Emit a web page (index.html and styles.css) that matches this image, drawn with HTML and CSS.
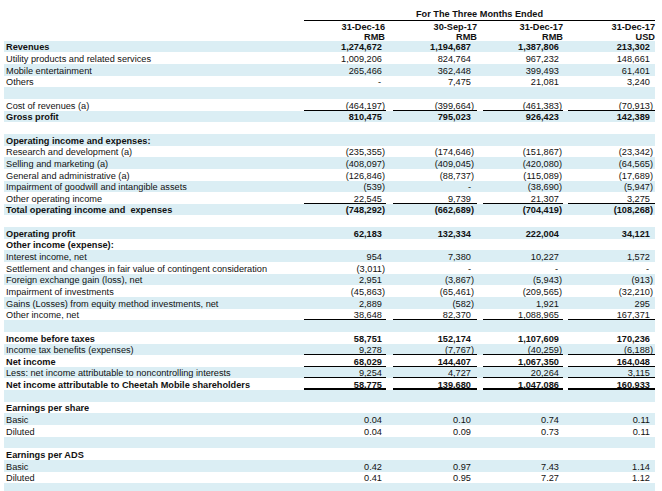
FILE: index.html
```html
<!DOCTYPE html>
<html>
<head>
<meta charset="utf-8">
<link rel="stylesheet" href="styles.css">
</head>
<body>
<div class="sheet">
  <div class="row head h1"><div class="span">For The Three Months Ended</div></div>
  <div class="row head h2"><div class="c c1">31-Dec-16</div><div class="c c2">30-Sep-17</div><div class="c c3">31-Dec-17</div><div class="c c4">31-Dec-17</div></div>
  <div class="row head h3"><div class="c c1">RMB</div><div class="c c2">RMB</div><div class="c c3">RMB</div><div class="c c4">USD</div></div>

  <div class="row alt b"><div class="lbl">Revenues</div><div class="c c1 p">1,274,672</div><div class="c c2 p">1,194,687</div><div class="c c3 p">1,387,806</div><div class="c c4 p">213,302</div></div>
  <div class="row"><div class="lbl">Utility products and related services</div><div class="c c1 p">1,009,206</div><div class="c c2 p">824,764</div><div class="c c3 p">967,232</div><div class="c c4 p">148,661</div></div>
  <div class="row alt"><div class="lbl">Mobile entertainment</div><div class="c c1 p">265,466</div><div class="c c2 p">362,448</div><div class="c c3 p">399,493</div><div class="c c4 p">61,401</div></div>
  <div class="row"><div class="lbl">Others</div><div class="c c1 d">-</div><div class="c c2 p">7,475</div><div class="c c3 p">21,081</div><div class="c c4 p">3,240</div></div>
  <div class="row alt"></div>
  <div class="row u"><div class="lbl">Cost of revenues (a)</div><div class="c c1">(464,197)</div><div class="c c2">(399,664)</div><div class="c c3">(461,383)</div><div class="c c4">(70,913)</div></div>
  <div class="row alt b"><div class="lbl">Gross profit</div><div class="c c1 p">810,475</div><div class="c c2 p">795,023</div><div class="c c3 p">926,423</div><div class="c c4 p">142,389</div></div>
  <div class="row"></div>
  <div class="row alt b"><div class="lbl">Operating income and expenses:</div></div>
  <div class="row"><div class="lbl">Research and development (a)</div><div class="c c1">(235,355)</div><div class="c c2">(174,646)</div><div class="c c3">(151,867)</div><div class="c c4">(23,342)</div></div>
  <div class="row alt"><div class="lbl">Selling and marketing (a)</div><div class="c c1">(408,097)</div><div class="c c2">(409,045)</div><div class="c c3">(420,080)</div><div class="c c4">(64,565)</div></div>
  <div class="row"><div class="lbl">General and administrative (a)</div><div class="c c1">(126,846)</div><div class="c c2">(88,737)</div><div class="c c3">(115,089)</div><div class="c c4">(17,689)</div></div>
  <div class="row alt"><div class="lbl">Impairment of goodwill and intangible assets</div><div class="c c1">(539)</div><div class="c c2 d">-</div><div class="c c3">(38,690)</div><div class="c c4">(5,947)</div></div>
  <div class="row u"><div class="lbl">Other operating income</div><div class="c c1 p">22,545</div><div class="c c2 p">9,739</div><div class="c c3 p">21,307</div><div class="c c4 p">3,275</div></div>
  <div class="row alt b"><div class="lbl">Total operating income and&nbsp; expenses</div><div class="c c1">(748,292)</div><div class="c c2">(662,689)</div><div class="c c3">(704,419)</div><div class="c c4">(108,268)</div></div>
  <div class="row"></div>
  <div class="row alt b"><div class="lbl">Operating profit</div><div class="c c1 p">62,183</div><div class="c c2 p">132,334</div><div class="c c3 p">222,004</div><div class="c c4 p">34,121</div></div>
  <div class="row b"><div class="lbl">Other income (expense):</div></div>
  <div class="row alt"><div class="lbl">Interest income, net</div><div class="c c1 p">954</div><div class="c c2 p">7,380</div><div class="c c3 p">10,227</div><div class="c c4 p">1,572</div></div>
  <div class="row"><div class="lbl">Settlement and changes in fair value of contingent consideration</div><div class="c c1">(3,011)</div><div class="c c2 d">-</div><div class="c c3 d">-</div><div class="c c4 d">-</div></div>
  <div class="row alt"><div class="lbl">Foreign exchange gain (loss), net</div><div class="c c1 p">2,951</div><div class="c c2">(3,867)</div><div class="c c3">(5,943)</div><div class="c c4">(913)</div></div>
  <div class="row"><div class="lbl">Impairment of investments</div><div class="c c1">(45,863)</div><div class="c c2">(65,461)</div><div class="c c3">(209,565)</div><div class="c c4">(32,210)</div></div>
  <div class="row alt"><div class="lbl">Gains (Losses) from equity method investments, net</div><div class="c c1 p">2,889</div><div class="c c2">(582)</div><div class="c c3 p">1,921</div><div class="c c4 p">295</div></div>
  <div class="row u"><div class="lbl">Other income, net</div><div class="c c1 p">38,648</div><div class="c c2 p">82,370</div><div class="c c3 p">1,088,965</div><div class="c c4 p">167,371</div></div>
  <div class="row alt"></div>
  <div class="row b"><div class="lbl">Income before taxes</div><div class="c c1 p">58,751</div><div class="c c2 p">152,174</div><div class="c c3 p">1,107,609</div><div class="c c4 p">170,236</div></div>
  <div class="row alt u"><div class="lbl">Income tax benefits (expenses)</div><div class="c c1 p">9,278</div><div class="c c2">(7,767)</div><div class="c c3">(40,259)</div><div class="c c4">(6,188)</div></div>
  <div class="row b u"><div class="lbl">Net income</div><div class="c c1 p">68,029</div><div class="c c2 p">144,407</div><div class="c c3 p">1,067,350</div><div class="c c4 p">164,048</div></div>
  <div class="row alt u"><div class="lbl">Less: net income attributable to noncontrolling interests</div><div class="c c1 p">9,254</div><div class="c c2 p">4,727</div><div class="c c3 p">20,264</div><div class="c c4 p">3,115</div></div>
  <div class="row b uu"><div class="lbl">Net income attributable to Cheetah Mobile shareholders</div><div class="c c1 p"><span class="ul">58,775</span></div><div class="c c2 p"><span class="ul">139,680</span></div><div class="c c3 p"><span class="ul">1,047,086</span></div><div class="c c4 p"><span class="ul">160,933</span></div></div>
  <div class="row alt"></div>
  <div class="row b"><div class="lbl">Earnings per share</div></div>
  <div class="row alt"><div class="lbl">Basic</div><div class="c c1 p">0.04</div><div class="c c2 p">0.10</div><div class="c c3 p">0.74</div><div class="c c4 p">0.11</div></div>
  <div class="row"><div class="lbl">Diluted</div><div class="c c1 p">0.04</div><div class="c c2 p">0.09</div><div class="c c3 p">0.73</div><div class="c c4 p">0.11</div></div>
  <div class="row alt"></div>
  <div class="row b"><div class="lbl">Earnings per ADS</div></div>
  <div class="row alt"><div class="lbl">Basic</div><div class="c c1 p">0.42</div><div class="c c2 p">0.97</div><div class="c c3 p">7.43</div><div class="c c4 p">1.14</div></div>
  <div class="row"><div class="lbl">Diluted</div><div class="c c1 p">0.41</div><div class="c c2 p">0.95</div><div class="c c3 p">7.27</div><div class="c c4 p">1.12</div></div>
  <div class="row alt"></div>
</div>
</body>
</html>
```

FILE: styles.css
```css
html, body {
  margin: 0;
  padding: 0;
  background: #ffffff;
}

body {
  font-family: "Liberation Sans", Arial, sans-serif;
  font-size: 9.2px;
  color: #111;
  overflow: hidden;
}

.sheet {
  padding: 8px 0 0 4px;
  width: 651px;
}

.row {
  display: grid;
  grid-template-columns: 300px 82px 7px 84px 6px 80px 5px 87px;
  height: 11.65px;
  line-height: 10px;
}

.row.alt {
  background: #dbeef4;
}

.row.b {
  font-weight: bold;
}

.head {
  font-weight: bold;
}

.h1 {
  height: 13px;
}

.h2 {
  height: 10.5px;
}

.h3 {
  height: 9.35px;
}

.span {
  grid-column: 2 / 9;
  text-align: center;
  border-bottom: 1px solid #000;
  display: flex;
  align-items: flex-end;
  justify-content: center;
  padding-bottom: 1px;
}

.lbl {
  grid-column: 1;
  padding-left: 2px;
  white-space: nowrap;
  display: flex;
  align-items: flex-end;
}

.c {
  display: flex;
  align-items: flex-end;
  justify-content: flex-end;
  white-space: nowrap;
}

.c1 { grid-column: 2; padding-right: 1px; }
.c2 { grid-column: 4; padding-right: 3px; }
.c3 { grid-column: 6; padding-right: 1px; }
.c4 { grid-column: 8; padding-right: 2px; }

.head .c1 { padding-right: 1px; }
.head .c2 { padding-right: 0; }
.head .c3 { padding-right: 0; }
.head .c4 { padding-right: 0; }

.c.p { padding-right: calc(0.333em + 1px); }
.c2.p { padding-right: calc(0.333em + 3px); }
.c4.p { padding-right: calc(0.333em + 2px); }
.c.d { padding-right: calc(0.333em + 2px); }
.c2.d, .c4.d { padding-right: calc(0.333em + 3px); }

.u .c {
  box-shadow: inset 0 -1px 0 #000;
}

.uu .c {
  box-shadow: inset 0 -2px 0 #000;
}

.ul {
  text-decoration: underline;
  text-underline-offset: 1px;
}
```
